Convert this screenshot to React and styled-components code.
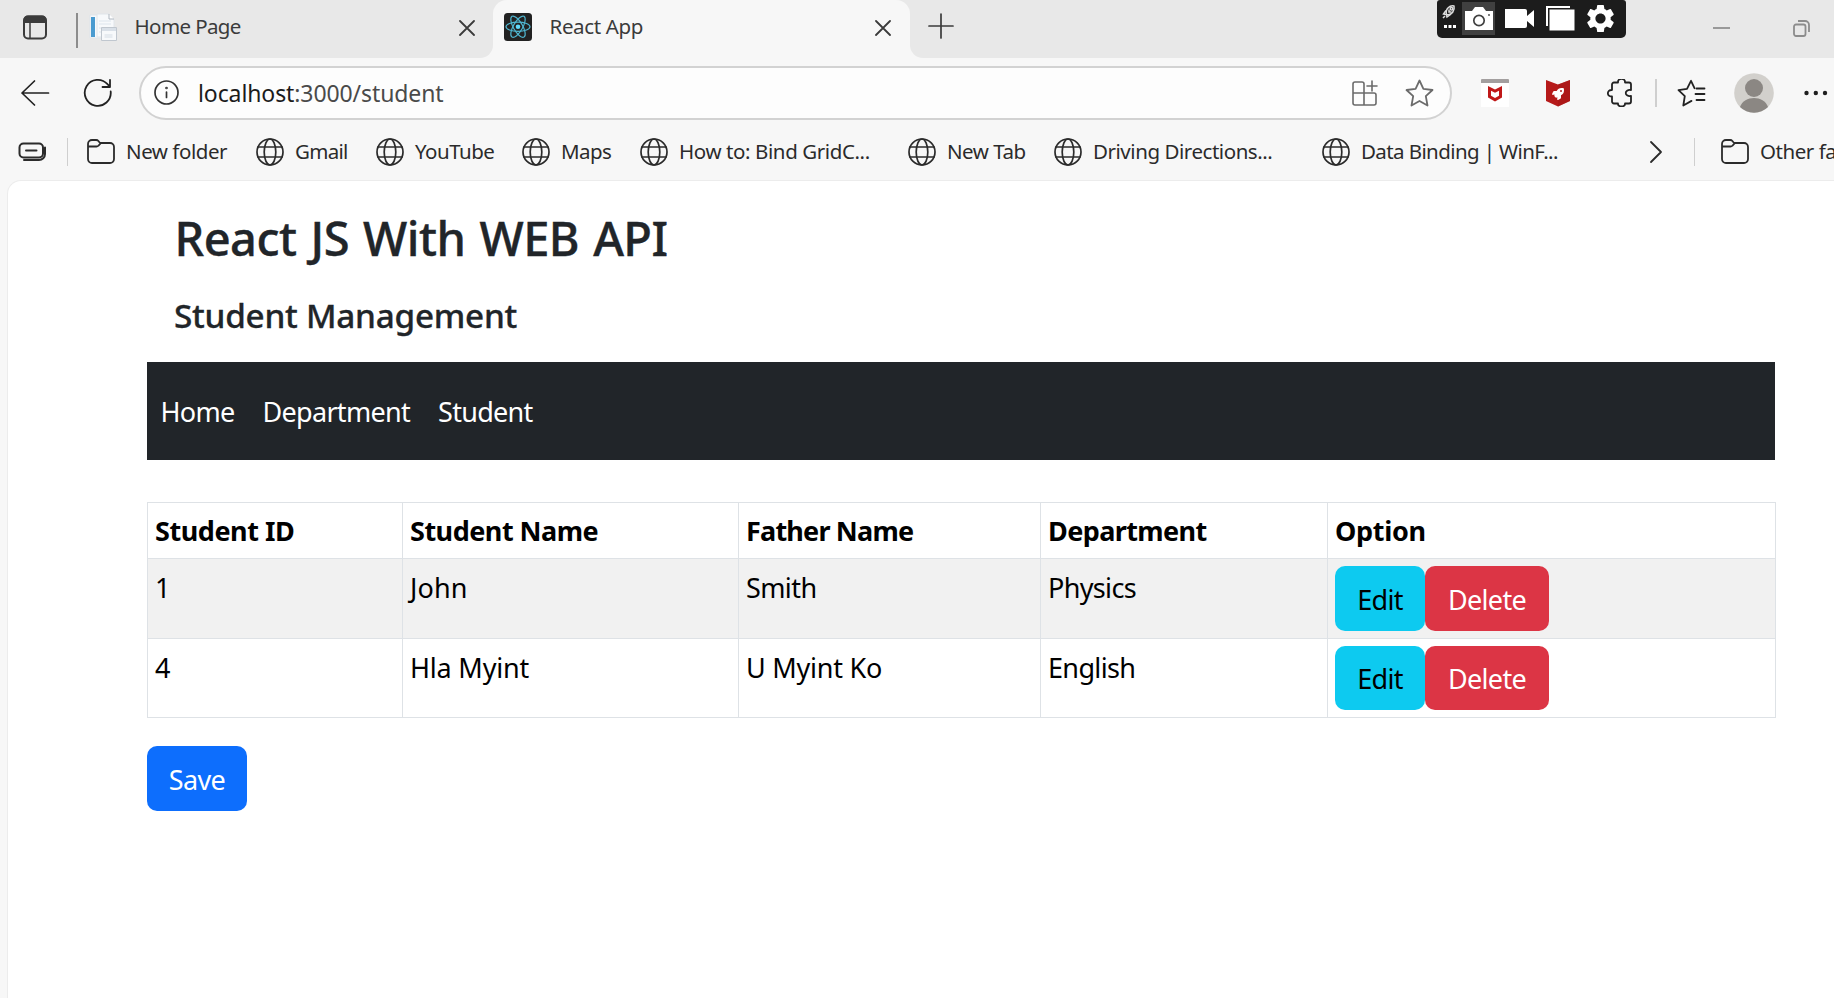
import React from 'react';
import styled, { createGlobalStyle } from 'styled-components';
import { MdSettings } from 'react-icons/md';
import { FaRocket } from 'react-icons/fa';

const GlobalStyle = createGlobalStyle`
  * { box-sizing: border-box; }
  body {
    margin: 0;
    overflow: hidden;
    background: #f7f7f7;
    font-family: "Noto Sans", "Open Sans", sans-serif;
  }
  svg { display: block; flex: none; }
`;

const Window = styled.div`
  display: flex;
  flex-direction: column;
  width: 1834px;
  height: 998px;
  overflow: hidden;
  background: #f7f7f7;
`;

/* ---------- tab strip ---------- */

const TabStrip = styled.header`
  display: flex;
  height: 58px;
  flex: none;
  color: #3b3b3b;
`;

const StripLeft = styled.div`
  display: flex;
  align-items: center;
  width: 493px;
  padding: 0 18px 4px 23px;
  background: #e8e8e8;
  border-radius: 0 0 13px 0;
`;

const StripRight = styled.div`
  display: flex;
  flex: 1;
  align-items: flex-start;
  background: #e8e8e8;
  border-radius: 0 0 0 13px;
`;

const ActiveTabSlot = styled.div`
  width: 417px;
  background: linear-gradient(#e8e8e8 50%, #f7f7f7 50%);
`;

const ActiveTab = styled.div`
  display: flex;
  align-items: center;
  height: 58px;
  padding: 0 19px 4px 11px;
  background: #f7f7f7;
  border-radius: 14px 14px 0 0;
`;

const TabDivider = styled.i`
  width: 2px;
  height: 35px;
  margin: 6px 11px 0 29px;
  background: #8c8c8c;
`;

const TabTitle = styled.span`
  flex: 1;
  margin-left: 17.5px;
  padding-bottom: 2px;
  font-size: 20.5px;
  line-height: 28px;
  letter-spacing: ${p => p.$tracking || '-0.6px'};
  white-space: nowrap;
`;

const CloseGlyph = styled.span`
  margin-top: 1px;
`;

const NewTab = styled.span`
  margin: 13px 0 0 18px;
`;

const Recorder = styled.div`
  display: flex;
  width: 189px;
  height: 38px;
  margin-left: 483px;
  background: #1c1c1c;
  border-radius: 3px 3px 5px 5px;
`;

const WindowButton = styled.span`
  margin: ${p => p.$top}px 0 0 ${p => p.$left}px;
`;

/* ---------- address row ---------- */

const AddressRow = styled.div`
  display: flex;
  align-items: center;
  height: 69px;
  flex: none;
  padding-left: 19px;
  color: #222;
`;

const AddressBox = styled.div`
  display: flex;
  align-items: center;
  width: 1313px;
  height: 54px;
  margin-left: 26px;
  padding: 0 16px 0 13px;
  background: #fdfdfd;
  border: 2px solid #d2d2d2;
  border-radius: 28px;
  color: #333;
`;

const Url = styled.span`
  flex: 1;
  margin-left: 19px;
  font-size: 23px;
  line-height: 32px;
  letter-spacing: -0.1px;
  color: #4a4a4a;

  b { font-weight: 400; color: #1b1b1b; }
`;

const AddressAction = styled.span`
  margin-left: 26px;
  color: #6b6b6b;
`;

const ToolbarItem = styled.span`
  margin-left: ${p => p.$gap}px;
`;

const Divider = styled.i`
  width: 2px;
  height: 28px;
  flex: none;
  margin-left: ${p => p.$gap}px;
  background: #cfcfcf;
`;

const Avatar = styled.span`
  margin-left: 28px;
  border-radius: 50%;
`;

/* ---------- favourites bar ---------- */

const FavouritesBar = styled.nav`
  display: flex;
  align-items: center;
  height: 49px;
  flex: none;
  padding-left: 18px;
  color: #2b2b2b;
`;

const Favourite = styled.span`
  display: flex;
  align-items: center;
  gap: 11px;
  width: ${p => p.$width}px;
  flex: none;
  font-size: 20.5px;
  line-height: 28px;
  letter-spacing: ${p => p.$tracking || '-0.45px'};
  white-space: nowrap;
`;

const FavouriteName = styled.span`
  margin-top: -2px;
`;

const FavouriteList = styled.div`
  display: flex;
  flex: none;
  width: 1562px;
  margin-left: 19px;
`;

const ThinDivider = styled.i`
  width: 1px;
  height: 28px;
  flex: none;
  margin-left: ${p => p.$gap}px;
  background: #cfcfcf;
`;

/* ---------- page ---------- */

const Page = styled.main`
  flex: 1;
  margin: 4px 0 0 7px;
  padding: 29px 59px 0 139px;
  background: #fff;
  border: solid #ececec;
  border-width: 1px 0 0 1px;
  border-radius: 14px 0 0 0;
  color: #212529;
`;

const Title = styled.h1`
  margin: 0;
  padding-left: 27.5px;
  font-size: 47px;
  font-weight: 500;
  line-height: 56px;
  letter-spacing: -0.55px;
  word-spacing: 2.5px;
  -webkit-text-stroke: 0.4px currentColor;
`;

const Subtitle = styled.h3`
  margin: 29px 0 27px;
  padding-left: 27px;
  font-size: 33.3px;
  font-weight: 500;
  line-height: 40px;
  letter-spacing: -0.25px;
  -webkit-text-stroke: 0.3px currentColor;
`;

const NavBar = styled.nav`
  display: flex;
  align-items: center;
  gap: 28px;
  height: 98px;
  padding: 1px 0 0 13.5px;
  background: #212529;
`;

const NavLink = styled.a`
  font-size: 27px;
  line-height: 41px;
  letter-spacing: ${p => p.$tracking};
  color: #fff;
`;

const StudentTable = styled.table`
  width: 1628px;
  margin-top: 42px;
  table-layout: fixed;
  border-collapse: collapse;
  color: #000;
`;

const HeadCell = styled.th`
  width: ${p => p.$width}px;
  height: 56px;
  padding: 0 7px;
  border: 1px solid #dee2e6;
  font-size: 27px;
  font-weight: 700;
  line-height: 41px;
  letter-spacing: ${p => p.$tracking};
  text-align: left;
`;

const BodyRow = styled.tr`
  height: ${p => p.$height}px;
  background: ${p => (p.$striped ? '#f1f1f1' : '#fff')};
`;

const Cell = styled.td`
  padding: 8px 7px 0;
  border: 1px solid #dee2e6;
  font-size: 27px;
  line-height: 41px;
  letter-spacing: ${p => p.$tracking || '-0.5px'};
  vertical-align: top;
`;

const ActionCell = styled(Cell)`
  padding-top: 7px;
`;

const Actions = styled.div`
  display: flex;
`;

const tones = {
  info: ['#0dcaf0', '#000'],
  danger: ['#dc3545', '#fff'],
  primary: ['#0d6efd', '#fff'],
};

const Button = styled.button`
  width: ${p => p.$width}px;
  height: ${p => p.$height || 65}px;
  padding: 1px 0 0;
  border: 0;
  border-radius: 10px;
  background: ${p => tones[p.$tone][0]};
  color: ${p => tones[p.$tone][1]};
  font: 400 27px/41px "Noto Sans", sans-serif;
  letter-spacing: -0.65px;
`;

const SaveArea = styled.div`
  margin-top: 28px;
`;

/* ---------- icons ---------- */

const Line = ({ w, h = w, sw = 2, children }) => (
  <svg width={w} height={h} viewBox={`0 0 ${w} ${h}`} fill="none" stroke="currentColor"
    strokeWidth={sw} strokeLinecap="round" strokeLinejoin="round">{children}</svg>
);

const Globe = () => (
  <Line w={28} sw={1.7}>
    <circle cx="14" cy="14" r="13" />
    <ellipse cx="14" cy="14" rx="5.8" ry="13" />
    <path d="M2 9h24M2 19h24" />
  </Line>
);

const Folder = () => (
  <Line w={28} h={26} sw={1.8}>
    <path d="M1 8V5a4 4 0 0 1 4-4h4.200a3 3 0 0 1 2.200 1L13 4h10a4 4 0 0 1 4 4v12a4 4 0 0 1-4 4H5a4 4 0 0 1-4-4zM1 7.500h8.500a3 3 0 0 0 2-.8L14 4" />
  </Line>
);

const Close = () => <Line w={16} sw={1.8}><path d="m1 1 14 14M15 1 1 15" /></Line>;

const TabActions = () => (
  <Line w={24} h={25} sw={2}>
    <rect x="1" y="1.500" width="22" height="22" rx="4" />
    <path d="M1.500 7V5a3.500 3.500 0 0 1 3.500-3.500h14A3.500 3.500 0 0 1 22.500 5v2z" fill="currentColor" />
    <path d="M7 7v16" strokeWidth="1.500" />
  </Line>
);

const Documents = () => (
  <svg width="28" height="28" viewBox="0 0 28 28">
    <path d="M1 2h16v23H1z" fill="#f6f9fc" stroke="#dfe5ea" />
    <path d="M2 4h4v20H2z" fill="#4a9bd0" />
    <path d="M8 1h12l5 5v18H8z" fill="#f7f9fb" stroke="#e0e5ea" />
    <path d="M20 1v5h5" fill="#fff" stroke="#aeb6bf" />
    <path d="M10 8h12M10 11h12M10 15h12M10 19h4" stroke="#dde5ed" />
    <path d="M12.500 14.500h15v13h-15z" fill="#f7f9fb" stroke="#c0c7cf" />
    <path d="M13 15h14v3H13z" fill="#d9e0e8" />
    <path d="M15.500 21h8v4h-8z" fill="#e6ebf0" />
  </svg>
);

const ReactLogo = () => (
  <svg width="28" height="28" viewBox="0 0 28 28">
    <rect width="28" height="28" rx="3.500" fill="#222" />
    <g fill="none" stroke="#4fb5cf" strokeWidth="1.200">
      <ellipse cx="14" cy="13.700" rx="12" ry="4.600" />
      <ellipse cx="14" cy="13.700" rx="12" ry="4.600" transform="rotate(60 14 13.700)" />
      <ellipse cx="14" cy="13.700" rx="12" ry="4.600" transform="rotate(120 14 13.700)" />
    </g>
    <circle cx="14" cy="13.700" r="2.300" fill="#61dafb" />
  </svg>
);

const RecorderTools = () => (
  <svg width="189" height="38" viewBox="0 0 189 38">
    <g transform="translate(5 5)" fill="none" stroke="#ddd" strokeWidth="1.500">
      <path d="M4.500 9.500C3 4 8 0 12 1c1 4-2 10-7.500 8.500z" />
      <path d="M4 5.500 1.500 9l2.500.5M8.500 9.500 5 12l-.5-2.500M1 13l2-2" />
      <path d="M7 4.500v2.500h2.500" />
      <circle cx="9.500" cy="3.800" r="1.300" />
    </g>
    <path d="M7 25h3v3H7zM11.500 25h3v3h-3zM16 25h3v3h-3z" fill="#fff" />
    <path d="M25 2h33v33H25z" fill="#404040" />
    <path d="M28 11h7l3-4h8l3 4h7v19H28z" fill="#fff" />
    <circle cx="42" cy="20.500" r="5.200" fill="none" stroke="#404040" strokeWidth="1.700" />
    <circle cx="52" cy="15" r=".9" fill="#404040" />
    <path d="M68 9h20q2 0 2 2v5l7-6v17l-7-6v5q0 2-2 2H68z" fill="#fff" />
    <path d="M109 6h24v2h-22v18h-2z" fill="#fff" />
    <path d="M112.500 9.500h25v21h-25z" fill="#fff" />
    <MdSettings x="146.500" y="1.500" size={34} color="#fff" />
  </svg>
);

const Shield = () => (
  <svg width="28" height="28" viewBox="0 0 28 28">
    <path d="M0 3h28v25H0z" fill="#fff" />
    <path d="M1 0h26q1 0 1 1v3H0V1q0-1 1-1z" fill="#a39f9f" />
    <path d="m7 7 7 3.500L21 7v11.500L14 22.500 7 18.500zm3 4.700v5l4 2.300 4-2.300v-5l-4 2z" fill="#c01818" fillRule="evenodd" />
  </svg>
);

const RocketShield = () => (
  <svg width="24" height="28" viewBox="0 0 24 28">
    <path d="m0 1 12 4.500L24 1v21l-12 5.500L0 22z" fill="#b61a1a" />
    <path d="M12 5.500 24 1v21l-12 5.500z" fill="#a31515" opacity=".5" />
    <FaRocket x="6" y="9" size={12} color="#fff" />
  </svg>
);

const Profile = () => (
  <svg width="40" height="40" viewBox="0 0 40 40">
    <circle cx="20" cy="20" r="19.800" fill="#d2d0cc" />
    <circle cx="20" cy="15" r="9" fill="#8b8783" />
    <path d="M6 34c4-12 24-12 28 0a20 20 0 0 1-28 0z" fill="#8b8783" />
  </svg>
);

const favourites = [
  ['Gmail', 120, '-0.7px'],
  ['YouTube', 146, '-0.5px'],
  ['Maps', 118, '-0.6px'],
  ['How to: Bind GridC...', 268, '-0.4px'],
  ['New Tab', 146, '-0.5px'],
  ['Driving Directions...', 268, '-0.45px'],
  ['Data Binding | WinF...', 260, '-0.6px'],
];

const columns = [
  ['Student ID', 255, '-0.45px'],
  ['Student Name', 336, '-0.5px'],
  ['Father Name', 302, '-0.8px'],
  ['Department', 287, '-0.6px'],
  ['Option', 448, '-0.3px'],
];

const students = [
  [['1'], ['John', '0.1px'], ['Smith', '-0.6px'], ['Physics', '-0.65px']],
  [['4'], ['Hla Myint', '-0.2px'], ['U Myint Ko', '-0.25px'], ['English', '-0.65px']],
];

export default function App() {
  return (
    <Window>
      <GlobalStyle />
      <TabStrip>
        <StripLeft>
          <TabActions />
          <TabDivider />
          <Documents />
          <TabTitle>Home Page</TabTitle>
          <CloseGlyph><Close /></CloseGlyph>
        </StripLeft>
        <ActiveTabSlot>
          <ActiveTab>
            <ReactLogo />
            <TabTitle $tracking="-0.35px">React App</TabTitle>
            <CloseGlyph><Close /></CloseGlyph>
          </ActiveTab>
        </ActiveTabSlot>
        <StripRight>
          <NewTab><Line w={26} sw={1.7}><path d="M13 1v24M1 13h24" /></Line></NewTab>
          <Recorder><RecorderTools /></Recorder>
          <WindowButton $left={87} $top={27}>
            <svg width="17" height="2"><path d="M0 1h17" stroke="#999" strokeWidth="2" /></svg>
          </WindowButton>
          <WindowButton $left={63} $top={20}>
            <svg width="17" height="17" fill="none" stroke="#8c8c8c" strokeWidth="1.800">
              <rect x="1" y="4.500" width="11.500" height="11.500" rx="2" />
              <path d="M5 1h7a4 4 0 0 1 4 4v7" />
            </svg>
          </WindowButton>
        </StripRight>
      </TabStrip>

      <AddressRow>
        <Line w={32} h={28} sw={1.7}><path d="M29.500 14H3M15.500 2 3 14l12.500 12" /></Line>
        <ToolbarItem $gap={32}>
          <Line w={30} sw={1.8}><path d="M27.700 13.500A13 13 0 1 1 24.500 6.200L27 8.800M27 2v7h-7.500" /></Line>
        </ToolbarItem>
        <AddressBox>
          <Line w={25} sw={1.7}>
            <circle cx="12.500" cy="12.500" r="11.500" />
            <path d="M12.500 12v5.500" /><circle cx="12.500" cy="8" r=".5" />
          </Line>
          <Url><b>localhost</b>:3000/student</Url>
          <AddressAction>
            <Line w={28} h={28} sw={1.6}>
              <path d="M13 14V5a2 2 0 0 0-2-2H4a2 2 0 0 0-2 2v19a2 2 0 0 0 2 2h19a2 2 0 0 0 2-2v-8a2 2 0 0 0-2-2zM2 14h11v12M21 2v10M16 7h10" />
            </Line>
          </AddressAction>
          <AddressAction>
            <Line w={29} h={28} sw={1.8}>
              <path d="m14.500 1.500 3.900 8.300 9.100 1.200-6.700 6.200 1.700 9.300-8-4.500-8 4.500 1.700-9.300L1.500 11l9.100-1.200z" />
            </Line>
          </AddressAction>
        </AddressBox>
        <ToolbarItem $gap={29}><Shield /></ToolbarItem>
        <ToolbarItem $gap={37}><RocketShield /></ToolbarItem>
        <ToolbarItem $gap={37}>
          <Line w={28} h={28} sw={1.8}>
            <path d="M5 5.500a2 2 0 0 1 2-2h4c-.5-5 7.500-5 7 0h4a2 2 0 0 1 2 2V11c-7-1-7 7 0 6v5.500a2 2 0 0 1-2 2h-4c.5 4-7.500 4-7 0H7a2 2 0 0 1-2-2V17.500c-5.500.5-5.500-7 0-6.500z" />
          </Line>
        </ToolbarItem>
        <Divider $gap={20} />
        <ToolbarItem $gap={20}>
          <Line w={29} h={28} sw={1.8}>
            <path d="m17.500 9.200-3.500-7.400-4 8-8.500 1.400 6.300 6-1.500 9.300 8.200-4.600M19.500 9.500h8M18.500 15h9M19.500 21h8" />
          </Line>
        </ToolbarItem>
        <Avatar><Profile /></Avatar>
        <ToolbarItem $gap={30}>
          <svg width="24" height="6" fill="#1f1f1f"><circle cx="2.500" cy="3" r="2.200" /><circle cx="11.800" cy="3" r="2.200" /><circle cx="21" cy="3" r="2.200" /></svg>
        </ToolbarItem>
      </AddressRow>

      <FavouritesBar>
        <Line w={28} h={20} sw={2}>
          <rect x="1.500" y="1.500" width="23.500" height="14" rx="4" />
          <path d="M8 8.500h10.500" />
          <path d="M27 5.500v6.500a6 6 0 0 1-6 6H6" />
        </Line>
        <ThinDivider $gap={21} />
        <FavouriteList>
          <Favourite $width={169}><Folder /><FavouriteName>New folder</FavouriteName></Favourite>
          {favourites.map(([name, width, tracking]) => (
            <Favourite key={name} $width={width} $tracking={tracking}>
              <Globe /><FavouriteName>{name}</FavouriteName>
            </Favourite>
          ))}
        </FavouriteList>
        <Line w={14} h={24} sw={1.8}><path d="m2 2 10 10L2 22" /></Line>
        <ThinDivider $gap={31} />
        <ToolbarItem $gap={26}>
          <Favourite $width={113}><Folder /><FavouriteName>Other fa</FavouriteName></Favourite>
        </ToolbarItem>
      </FavouritesBar>

      <Page>
        <Title>React JS With WEB API</Title>
        <Subtitle>Student Management</Subtitle>
        <NavBar>
          <NavLink $tracking="-0.7px">Home</NavLink>
          <NavLink $tracking="-0.7px">Department</NavLink>
          <NavLink $tracking="-0.7px">Student</NavLink>
        </NavBar>
        <StudentTable>
          <thead>
            <tr>
              {columns.map(([name, width, tracking]) => (
                <HeadCell key={name} $width={width} $tracking={tracking}>{name}</HeadCell>
              ))}
            </tr>
          </thead>
          <tbody>
            {students.map((student, i) => (
              <BodyRow key={student[0][0]} $striped={i % 2 === 0} $height={i === 0 ? 80 : 79}>
                {student.map(([value, tracking]) => <Cell key={value} $tracking={tracking}>{value}</Cell>)}
                <ActionCell>
                  <Actions>
                    <Button $tone="info" $width={90} $height={65 - i}>Edit</Button>
                    <Button $tone="danger" $width={124} $height={65 - i}>Delete</Button>
                  </Actions>
                </ActionCell>
              </BodyRow>
            ))}
          </tbody>
        </StudentTable>
        <SaveArea><Button $tone="primary" $width={100}>Save</Button></SaveArea>
      </Page>
    </Window>
  );
}
